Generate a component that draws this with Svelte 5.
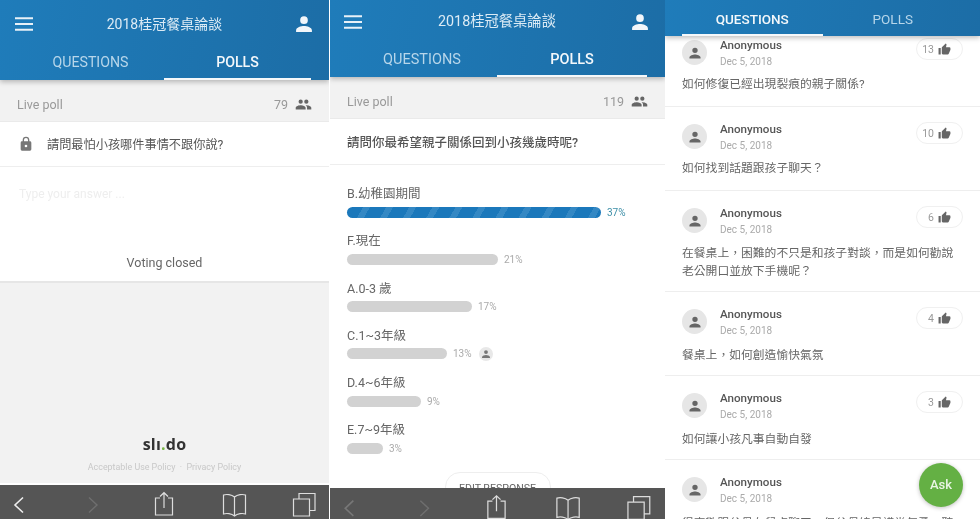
<script lang="ts">
  const options = [
    { label: 'B.幼稚園期間', pct: 37, width: 254, top: true },
    { label: 'F.現在', pct: 21, width: 151 },
    { label: 'A.0-3 歲', pct: 17, width: 125 },
    { label: 'C.1~3年級', pct: 13, width: 100, me: true },
    { label: 'D.4~6年級', pct: 9, width: 74 },
    { label: 'E.7~9年級', pct: 3, width: 36 }
  ];
  const questions = [
    { text: ['如何修復已經出現裂痕的親子關係?'], votes: 13 },
    { text: ['如何找到話題跟孩子聊天？'], votes: 10 },
    { text: ['在餐桌上，困難的不只是和孩子對談，而是如何勸說', '老公開口並放下手機呢？'], votes: 6 },
    { text: ['餐桌上，如何創造愉快氣氛'], votes: 4 },
    { text: ['如何讓小孩凡事自動自發'], votes: 3 },
    { text: ['很喜歡跟父母在餐桌聊天，但父母總是講當年勇，聽'], votes: 0 }
  ];
</script>

{#snippet menu()}
  <svg class="ic-menu" viewBox="0 0 18 14" width="18" height="14"><path d="M0 1.200h18M0 7h18M0 12.800h18" stroke="#e8f1f8" stroke-width="2" fill="none" /></svg>
{/snippet}
{#snippet person(size, color)}
  <svg viewBox="0 0 24 24" width={size} height={size}><path fill={color} d="M12 12a4.600 4.600 0 1 0 0-9.200 4.600 4.600 0 0 0 0 9.200zm0 2.400c-3.400 0-9.500 1.700-9.500 5v2.200h19v-2.200c0-3.300-6.100-5-9.500-5z" /></svg>
{/snippet}
{#snippet people()}
  <svg viewBox="0 0 24 24" width="17" height="17"><path fill="#666" d="M16 11a3 3 0 1 0 0-6 3 3 0 0 0 0 6zm-8 0a3 3 0 1 0 0-6 3 3 0 0 0 0 6zm0 2c-2.400 0-7 1.200-7 3.500V19h14v-2.500C15 14.200 10.400 13 8 13zm8 0h-1c1.200.9 2 2 2 3.500V19h6v-2.500c0-2.300-4.600-3.500-7-3.500z" /></svg>
{/snippet}
{#snippet toolbar(dimBack)}
  <svg class="toolbar" viewBox="0 0 330 34" preserveAspectRatio="xMinYMin slice">
    <g fill="none" stroke-width="1.200">
      <path d="M23 12.500 15 20l8 7.500" stroke={dimBack ? '#777' : '#eee'} stroke-width="1.600" />
      <path d="M89 12.500l8 7.500-8 7.500" stroke="#6f6f6f" stroke-width="1.400" />
      <path d="M160 13h-4.500v17h17V13H168M164 23V8M160 11.500l4-3.800 4 3.800" stroke="#ddd" />
      <path d="M234.500 12c-3-2.500-8-3-11-2v19c3-1 8-.5 11 2 3-2.500 8-3 11-2V10c-3-1-8-.5-11 2zM234.500 12v19" stroke="#ddd" />
      <path d="M293.500 14h16v17h-16zM299 14V8.500h16v17h-5.500" stroke="#ddd" />
    </g>
  </svg>
{/snippet}
{#snippet tabs(active)}
  <div class="tabs">
    <div class="tab" class:on={active === 'q'}>QUESTIONS</div>
    <div class="tab" class:on={active === 'p'}>POLLS</div>
  </div>
{/snippet}

<main class="screen">
  <section class="phone one">
    <header class="bar tall">
      <div class="top">
        {@render menu()}
        <span class="title">2018桂冠餐桌論談</span>
        <span class="me">{@render person(20, '#f2f6fa')}</span>
      </div>
      {@render tabs('p')}
    </header>
    <div class="live"><span>Live poll</span><span class="count">79 {@render people()}</span></div>
    <div class="ask locked">
      <svg viewBox="0 0 24 24" width="16" height="16" preserveAspectRatio="none"><path fill="#777" d="M18 8h-1V6a5 5 0 0 0-10 0v2H6a2 2 0 0 0-2 2v10a2 2 0 0 0 2 2h12a2 2 0 0 0 2-2V10a2 2 0 0 0-2-2zM9 6a3 3 0 0 1 6 0v2H9zm3 11a2 2 0 1 1 0-4 2 2 0 0 1 0 4z" /></svg>
      <span>請問最怕小孩哪件事情不跟你說?</span>
    </div>
    <div class="answer">
      <p class="placeholder">Type your answer ...</p>
      <p class="closed">Voting closed</p>
    </div>
    <div class="foot">
      <div class="logo">sl<span>ı</span><span class="dot">.</span>do</div>
      <div class="links">Acceptable Use Policy &nbsp;·&nbsp; Privacy Policy</div>
    </div>
    {@render toolbar(false)}
  </section>

  <section class="phone two">
    <header class="bar short">
      <div class="top">
        {@render menu()}
        <span class="title">2018桂冠餐桌論談</span>
        <span class="me">{@render person(20, '#f2f6fa')}</span>
      </div>
      {@render tabs('p')}
    </header>
    <div class="live"><span>Live poll</span><span class="count">119 {@render people()}</span></div>
    <div class="ask strong">請問你最希望親子關係回到小孩幾歲時呢?</div>
    <div class="results">
      {#each options as o (o.label)}
        <div class="opt">
          <div class="opt-label">{o.label}</div>
          <div class="opt-row">
            <div class="track" class:lead={o.top} style="width:{o.width}px"></div>
            <span class="pct" class:lead={o.top}>{o.pct}%</span>
            {#if o.me}<span class="mine">{@render person(10, '#777')}</span>{/if}
          </div>
        </div>
      {/each}
      <div class="edit">EDIT RESPONSE</div>
    </div>
    <div class="toolbar-over">{@render toolbar(true)}</div>
  </section>

  <section class="phone three">
    <header class="bar flat">{@render tabs('q')}</header>
    <div class="list">
      {#each questions as q, i (i)}
        <article class="q">
          <div class="avatar">{@render person(14, '#666')}</div>
          <div class="who">
            <div class="name">Anonymous</div>
            <div class="date">Dec 5, 2018</div>
          </div>
          {#if q.votes}
            <div class="votes">{q.votes}
              <svg viewBox="0 0 24 24" width="13" height="13"><path fill="#666" d="M1 21h4V9H1zm22-11a2 2 0 0 0-2-2h-6.300l1-4.600v-.3c0-.4-.2-.8-.4-1.100L14.200 1 7.600 7.600C7.200 8 7 8.500 7 9v10a2 2 0 0 0 2 2h9c.8 0 1.500-.5 1.800-1.200l3-7c.1-.2.2-.5.2-.8z" /></svg>
            </div>
          {/if}
          <div class="text">
            {#each q.text as line}<div>{line}</div>{/each}
          </div>
        </article>
      {/each}
    </div>
    <div class="fab">Ask</div>
  </section>
</main>

<style>
  :global(body) { margin: 0; background: #fff; }
  .screen {
    display: flex; width: 980px; height: 519px; overflow: hidden;
    font-family: Roboto, "Noto Sans CJK TC", sans-serif; color: #555;
    filter: blur(0.35px);
  }
  .phone { position: relative; display: flex; flex-direction: column; height: 519px; overflow: hidden; background: #fff; }
  .one { width: 329px; background: #f2f2f2; }
  .two { width: 336px; border-left: 1px solid #fff; box-sizing: border-box; }
  .three { width: 315px; }

  .bar { position: relative; z-index: 2; flex: none; background: linear-gradient(100deg, #1f7cba, #1c6da6); box-shadow: 0 2px 5px rgba(0,0,0,.25); color: #fff; }
  .bar.tall { height: 80px; }
  .bar.short { height: 77px; }
  .bar.flat { height: 36px; }
  .top { display: grid; grid-template-columns: 1fr auto 1fr; align-items: center; height: 47px; padding: 0 15px; }
  .short .top { height: 43px; padding: 0 15px 0 14px; }
  .me { justify-self: end; display: flex; }
  .title { font-size: 14px; line-height: 1; color: #dcebf5; }
  .short .title { font-size: 14.300px; }

  .tabs { display: flex; padding: 0 18px 0 17px; }
  .tab { flex: 1; height: 33px; line-height: 31px; box-sizing: border-box; text-align: center; font-size: 14.200px; color: #b7d6ea; }
  .tab.on { color: #f4f8fb; font-weight: 500; border-bottom: 2.500px solid #f5f8fa; }
  .short .tabs { height: 34px; }
  .short .tab { height: 34px; line-height: 33px; font-size: 14.500px; }
  .flat .tabs { padding: 0 0 0 17px; width: 281px; height: 36px; }
  .flat .tab { height: 36px; line-height: 39px; font-size: 13.500px; }

  .live { flex: none; display: flex; justify-content: space-between; align-items: center; height: 42px; padding: 7px 17px 0; background: #f2f2f2; font-size: 12.500px; color: #999; border-bottom: 1px solid #eaeaea; box-sizing: border-box; }
  .count { display: flex; align-items: center; gap: 7px; font-size: 12.500px; }

  .ask { flex: none; display: flex; align-items: center; height: 45px; padding: 0 17px; background: #fff; font-size: 12.200px; color: #555; border-bottom: 1px solid #eee; box-sizing: border-box; }
  .locked { gap: 13px; padding-left: 18px; }
  .strong { font-size: 12.500px; font-weight: 500; height: 46px; }

  .answer { flex: none; height: 116px; box-sizing: border-box; background: #fff; border-bottom: 2px solid #e6e6e6; }
  .answer p { margin: 0; }
  .placeholder { padding: 20px 0 0 19px; font-size: 12px; color: #eeeeee; }
  .closed { padding-top: 54px; text-align: center; font-size: 12.500px; color: #666; }

  .foot { flex: 1; display: flex; flex-direction: column; align-items: center; justify-content: flex-end; padding-bottom: 11px; border-bottom: 2px solid #fff; }
  .logo { font-family: "Open Sans", sans-serif; font-size: 16px; font-weight: 700; line-height: 20px; color: #333; letter-spacing: .2px; }
  .logo .dot { color: #7ab648; }
  .links { margin-top: 8px; font-size: 8.900px; color: #c8c8c8; }

  .toolbar { display: block; flex: none; width: 100%; height: 34px; background: #555; }
  .toolbar-over { position: absolute; left: 0; right: 0; bottom: 0; height: 31px; overflow: hidden; background: #555; }

  .results { padding: 21px 17px 0; }
  .opt { height: 47.300px; }
  .opt-label { font-size: 12.500px; line-height: 15px; color: #666; }
  .opt-row { display: flex; align-items: center; gap: 6px; height: 24px; margin-top: -1px; }
  .track { height: 11px; border-radius: 6px; background: #d2d2d2; }
  .track.lead { background: repeating-linear-gradient(120deg, #1b78bb 0 14px, #3488c4 14px 20px); }
  .pct { font-size: 10px; color: #aaa; }
  .pct.lead { color: #3e8fa8; }
  .mine { display: flex; align-items: center; justify-content: center; width: 14px; height: 14px; border-radius: 50%; background: #e8e8e8; margin-left: 1px; }
  .edit { width: 106px; height: 30px; margin: 2px auto 0; border: 1px solid #eee; border-radius: 15px; text-align: center; font-size: 10.600px; line-height: 31px; color: #666; box-sizing: border-box; }

  .list { flex: 1; margin-top: -13px; position: relative; z-index: 1; }
  .q { display: grid; grid-template-columns: 25px 1fr auto; column-gap: 13px; align-items: start; padding: 15px 17px 0; height: 84px; box-sizing: border-box; border-bottom: 1px solid #eee; }
  .q:nth-child(3) { height: 101px; }
  .avatar { display: flex; align-items: center; justify-content: center; width: 25px; height: 25px; border-radius: 50%; background: #e6e6e6; margin-top: 2px; }
  .name { font-size: 11.600px; line-height: 15px; font-weight: 500; color: #555; }
  .date { font-size: 10px; line-height: 15px; margin-top: 1px; color: #aaa; }
  .votes { display: flex; align-items: center; justify-content: flex-end; gap: 4px; width: 47px; height: 22px; padding-right: 11px; margin-top: 0; box-sizing: border-box; border: 1px solid #f0f0f0; border-radius: 11px; font-size: 10.500px; color: #999; }
  .text { grid-column: 1 / -1; margin-top: -4px; font-size: 11.800px; line-height: 18px; color: #666; }
  .q:nth-child(-n+2) .text { margin-top: -6.500px; }

  .fab { position: absolute; z-index: 3; left: 254px; top: 463px; width: 44px; height: 44px; border-radius: 50%; background: #64b044; color: #eaf5e4; text-align: center; font-size: 13px; font-weight: 500; line-height: 43px; box-shadow: 0 1px 4px rgba(0,0,0,.25); }
</style>
